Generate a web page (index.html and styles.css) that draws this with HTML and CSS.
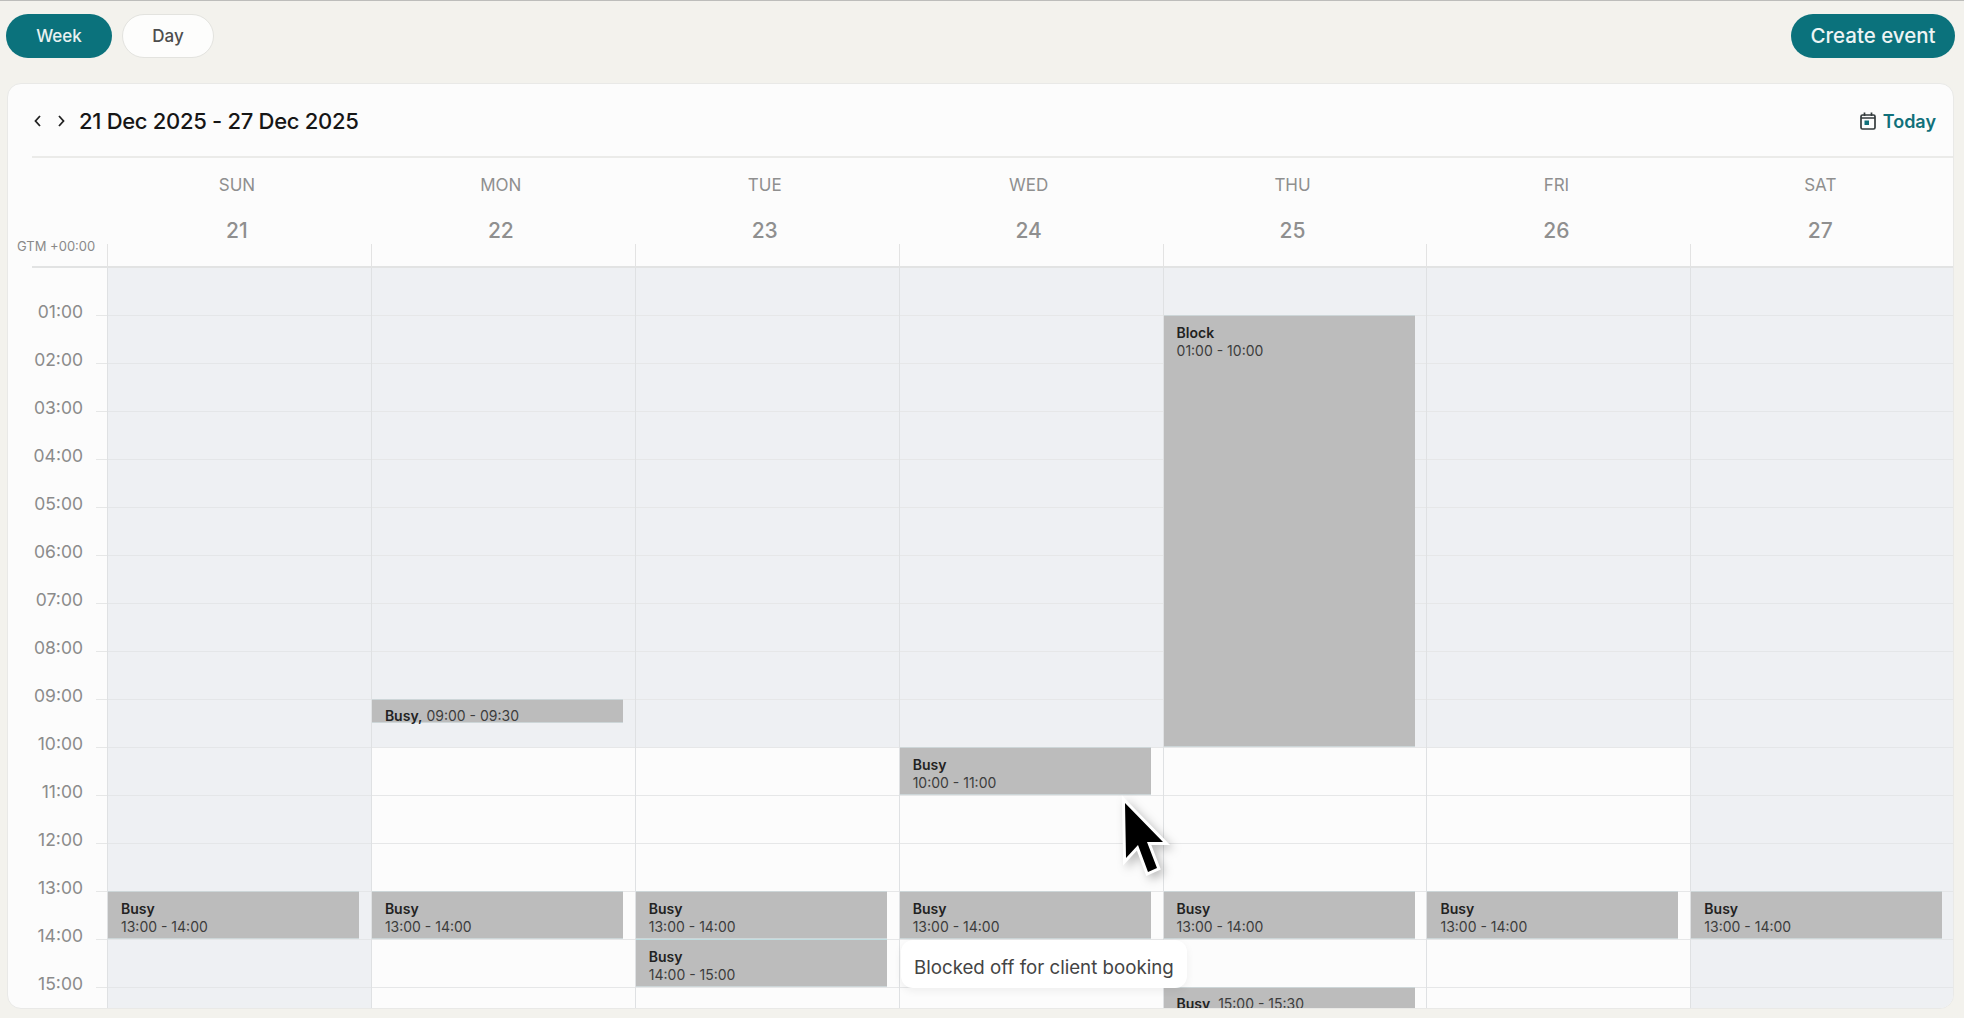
FILE: index.html
```html
<!DOCTYPE html>
<html lang="en">
<head>
<meta charset="utf-8">
<title>Calendar</title>
<link rel="stylesheet" href="styles.css">
</head>
<body>
<div class="topbar">
  <div class="tabs">
    <button class="pill pill-active">Week</button>
    <button class="pill pill-plain">Day</button>
  </div>
  <button class="pill create">Create event</button>
</div>
<section class="card">
  <header class="cal-head">
    <div class="range">
      <svg class="chev" viewBox="0 0 12 16"><path d="M8 3 3.5 8 8 13"/></svg>
      <svg class="chev" viewBox="0 0 12 16"><path d="M4 3 8.5 8 4 13"/></svg>
      <h1 class="title">21 Dec 2025 - 27 Dec 2025</h1>
    </div>
    <div class="today">
      <svg class="cal-icon" viewBox="0 0 16 18"><rect x="1" y="3" width="14" height="14" rx="1.5"/><path d="M1 6h14M4.5 0.5v3.5M11.5 0.5v3.5"/><rect class="dot" x="4.5" y="8.5" width="4.5" height="4.5"/></svg>
      <span>Today</span>
    </div>
  </header>
  <div class="days">
    <div class="gmt">GTM +00:00</div>
    <div class="day"><span class="dname">SUN</span><span class="dnum">21</span></div>
    <div class="day"><span class="dname">MON</span><span class="dnum">22</span></div>
    <div class="day"><span class="dname">TUE</span><span class="dnum">23</span></div>
    <div class="day"><span class="dname">WED</span><span class="dnum">24</span></div>
    <div class="day"><span class="dname">THU</span><span class="dnum">25</span></div>
    <div class="day"><span class="dname">FRI</span><span class="dnum">26</span></div>
    <div class="day"><span class="dname">SAT</span><span class="dnum">27</span></div>
  </div>
  <div class="body">
    <div class="hours">
      <div class="hour"><span>01:00</span></div>
      <div class="hour"><span>02:00</span></div>
      <div class="hour"><span>03:00</span></div>
      <div class="hour"><span>04:00</span></div>
      <div class="hour"><span>05:00</span></div>
      <div class="hour"><span>06:00</span></div>
      <div class="hour"><span>07:00</span></div>
      <div class="hour"><span>08:00</span></div>
      <div class="hour"><span>09:00</span></div>
      <div class="hour"><span>10:00</span></div>
      <div class="hour"><span>11:00</span></div>
      <div class="hour"><span>12:00</span></div>
      <div class="hour"><span>13:00</span></div>
      <div class="hour"><span>14:00</span></div>
      <div class="hour"><span>15:00</span></div>
    </div>
    <div class="col off-all">
      <div class="event" style="top:624px;height:48px"><b>Busy</b><span>13:00 - 14:00</span></div>
    </div>
    <div class="col off-am">
      <div class="event inline" style="top:432px;height:24px"><b>Busy,</b> 09:00 - 09:30</div>
      <div class="event" style="top:624px;height:48px"><b>Busy</b><span>13:00 - 14:00</span></div>
    </div>
    <div class="col off-am">
      <div class="event" style="top:624px;height:48px"><b>Busy</b><span>13:00 - 14:00</span></div>
      <div class="event event-joined" style="top:672px;height:48px"><b>Busy</b><span>14:00 - 15:00</span></div>
    </div>
    <div class="col off-am">
      <div class="event" style="top:480px;height:48px"><b>Busy</b><span>10:00 - 11:00</span></div>
      <div class="event" style="top:624px;height:48px"><b>Busy</b><span>13:00 - 14:00</span></div>
    </div>
    <div class="col off-am">
      <div class="event" style="top:48px;height:432px"><b>Block</b><span>01:00 - 10:00</span></div>
      <div class="event" style="top:624px;height:48px"><b>Busy</b><span>13:00 - 14:00</span></div>
      <div class="event inline" style="top:720px;height:24px"><b>Busy,</b> 15:00 - 15:30</div>
    </div>
    <div class="col off-am">
      <div class="event" style="top:624px;height:48px"><b>Busy</b><span>13:00 - 14:00</span></div>
    </div>
    <div class="col off-all">
      <div class="event" style="top:624px;height:48px"><b>Busy</b><span>13:00 - 14:00</span></div>
    </div>
    <div class="tooltip">Blocked off for client booking</div>
    <svg class="cursor" viewBox="0 0 60 85"><path d="M9 8 10 63 22 50 32 77 41 73 31 47H47Z"/></svg>
  </div>
</section>
</body>
</html>
```
FILE: styles.css
```css
* { box-sizing: border-box; }
html, body { margin: 0; height: 100%; overflow: hidden; }
body {
  background: #f3f2ed;
  border-top: 1px solid #bdbdbb;
  font-family: Inter, "Noto Sans", sans-serif;
  color: #1b1b1b;
}
.topbar {
  display: flex;
  justify-content: space-between;
  align-items: center;
  height: 82px;
  padding: 0 9px 13px 6px;
}
.tabs { display: flex; gap: 10px; }
.pill {
  height: 44px;
  border-radius: 22px;
  font: 500 17px Inter, sans-serif;
  border: 0;
  padding: 0;
}
.pill-active { width: 106px; background: #0b727c; color: #e9f1f1; }
.pill-plain { width: 92px; background: #fdfdfc; color: #4d4d4d; border: 1px solid #e3e3df; }
.create { width: 164px; background: #0b727c; color: #eef4f4; font-size: 20.5px; }
.card {
  margin-left: 7px;
  width: 1947px;
  height: 926px;
  background: #fcfcfc;
  border: 1px solid #e9e9e7;
  border-radius: 14px;
  overflow: hidden;
  position: relative;
}
.cal-head {
  margin-left: 24px;
  height: 74px;
  border-bottom: 2px solid #ebebe9;
  display: flex;
  align-items: center;
  justify-content: space-between;
  padding: 2px 17px 0 0;
}
.range { display: flex; align-items: center; }
.chev { width: 12px; height: 16px; margin-right: 11px; fill: none; stroke: #222; stroke-width: 1.8; }
.chev + .chev { margin-right: 12px; }
.title { margin: 0; font-size: 22px; font-weight: 500; color: #161616; letter-spacing: -0.3px; }
.today { display: flex; align-items: center; gap: 7px; color: #11707a; font-size: 18px; font-weight: 600; }
.cal-icon { width: 16px; height: 18px; fill: none; stroke: #333a3c; stroke-width: 1.7; }
.cal-icon .dot { fill: #11707a; stroke: none; }
.days {
  display: grid;
  grid-template-columns: 99px repeat(7, 263.9px);
  height: 110px;
  position: relative;
}
.days::after {
  content: "";
  position: absolute;
  left: 24px; right: 0; bottom: 0;
  height: 2px;
  background: #e2e3e3;
}
.gmt { align-self: end; font-size: 13px; color: #8a8a8a; padding: 0 0 14px 9px; white-space: nowrap; }
.day {
  display: flex;
  flex-direction: column;
  align-items: center;
  padding: 16px 4px 0 0;
  color: #8f8f8f;
  position: relative;
}
.day::before {
  content: "";
  position: absolute;
  left: 0; bottom: 0;
  width: 1px; height: 24px;
  background: #e3e3e3;
}
.dname { font-size: 17px; line-height: 22px; }
.dnum { font-size: 21px; font-weight: 500; line-height: 26px; margin-top: 22px; }
.body {
  display: grid;
  grid-template-columns: 99px repeat(7, 263.9px);
  height: 741px;
  position: relative;
}
.hour {
  height: 48px;
  position: relative;
  border-bottom: 1px solid #e6e7e7;
  margin-left: 88px;
}
.hour span {
  position: absolute;
  right: 24px;
  bottom: -8px;
  font-size: 17.5px;
  line-height: 22px;
  color: #8b8b8b;
}
.col {
  position: relative;
  border-left: 1px solid #dfe1e3;
  background-color: #fcfcfc;
}
.off-all {
  background-image: repeating-linear-gradient(to bottom, transparent 0, transparent 47px, #e4e6e8 47px, #e4e6e8 48px);
  background-color: #eef0f3;
}
.off-am {
  background-image:
    repeating-linear-gradient(to bottom, transparent 0, transparent 47px, #e6e7e8 47px, #e6e7e8 48px),
    linear-gradient(to bottom, #eef0f3 0, #eef0f3 480px, #fcfcfc 480px);
}
.event {
  position: absolute;
  left: 0;
  margin-top: -1px;
  width: 251px;
  background: #bcbcbc;
  border-top: 1px solid #cdd6d8;
  border-bottom: 1px solid #cdd6d8;
  padding: 8px 13px 0;
  font-size: 14px;
  line-height: 18px;
  color: #3d3d3d;
}
.event-joined { border-top-color: #c2dde0; }
.event b { display: block; font-weight: 600; color: #222; }
.event span { display: block; }
.event.inline { padding-top: 7px; white-space: nowrap; }
.event.inline b { display: inline; }
.tooltip {
  position: absolute;
  left: 893px;
  top: 672px;
  width: 286px;
  height: 48px;
  background: #fff;
  border-radius: 12px;
  box-shadow: 0 3px 8px rgba(0, 0, 0, 0.06);
  font-size: 18.7px;
  line-height: 56px;
  padding-left: 13px;
  color: #444;
  white-space: nowrap;
}
.cursor {
  position: absolute;
  left: 1108px;
  top: 527px;
  width: 60px;
  height: 85px;
  fill: #000;
  stroke: #fff;
  stroke-width: 6;
  stroke-linejoin: miter;
  paint-order: stroke;
  filter: drop-shadow(4px 4px 5px rgba(0, 0, 0, 0.25));
}
```
